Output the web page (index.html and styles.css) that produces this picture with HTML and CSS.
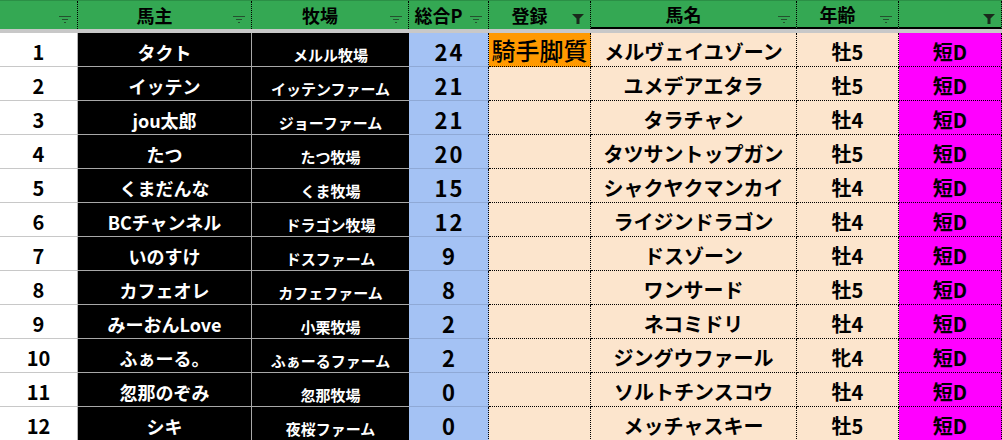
FILE: index.html
```html
<!DOCTYPE html>
<html lang="ja">
<head>
<meta charset="utf-8">
<link rel="stylesheet" href="styles.css">
</head>
<body>
<div class="sheet">
  <div class="row head">
    <div class="h"><span class="ht"></span><svg class="fi" viewBox="0 0 12 8"><path d="M0 .5h12M3 3.5h6M5 6.5h2"/></svg></div>
    <div class="h"><span class="ht">馬主</span><svg class="fi" viewBox="0 0 12 8"><path d="M0 .5h12M3 3.5h6M5 6.5h2"/></svg></div>
    <div class="h"><span class="ht">牧場</span><svg class="fi" viewBox="0 0 12 8"><path d="M0 .5h12M3 3.5h6M5 6.5h2"/></svg></div>
    <div class="h"><span class="ht">総合P</span><svg class="fi" viewBox="0 0 12 8"><path d="M0 .5h12M3 3.5h6M5 6.5h2"/></svg></div>
    <div class="h"><span class="ht">登録</span><svg class="ff" viewBox="0 0 12 10"><path d="M0 0h12L7.5 4.5V10h-3V4.5z"/></svg></div>
    <div class="h dark-under"><span class="ht">馬名</span><svg class="fi" viewBox="0 0 12 8"><path d="M0 .5h12M3 3.5h6M5 6.5h2"/></svg></div>
    <div class="h dark-under"><span class="ht">年齢</span><svg class="fi" viewBox="0 0 12 8"><path d="M0 .5h12M3 3.5h6M5 6.5h2"/></svg></div>
    <div class="h dark-under"><span class="ht"></span><svg class="ff" viewBox="0 0 12 10"><path d="M0 0h12L7.5 4.5V10h-3V4.5z"/></svg></div>
  </div>
  <div class="gap"></div>

  <div class="row"><div class="c c-idx">1</div><div class="c c-owner">タクト</div><div class="c c-farm">メルル牧場</div><div class="c c-pts">24</div><div class="c c-reg jockey">騎手脚質</div><div class="c c-horse">メルヴェイユゾーン</div><div class="c c-age">牡5</div><div class="c c-type">短D</div></div>
  <div class="row"><div class="c c-idx">2</div><div class="c c-owner">イッテン</div><div class="c c-farm">イッテンファーム</div><div class="c c-pts">21</div><div class="c c-reg"></div><div class="c c-horse">ユメデアエタラ</div><div class="c c-age">牡5</div><div class="c c-type">短D</div></div>
  <div class="row"><div class="c c-idx">3</div><div class="c c-owner">jou太郎</div><div class="c c-farm">ジョーファーム</div><div class="c c-pts">21</div><div class="c c-reg"></div><div class="c c-horse">タラチャン</div><div class="c c-age">牡4</div><div class="c c-type">短D</div></div>
  <div class="row"><div class="c c-idx">4</div><div class="c c-owner">たつ</div><div class="c c-farm">たつ牧場</div><div class="c c-pts">20</div><div class="c c-reg"></div><div class="c c-horse">タツサントップガン</div><div class="c c-age">牡5</div><div class="c c-type">短D</div></div>
  <div class="row"><div class="c c-idx">5</div><div class="c c-owner">くまだんな</div><div class="c c-farm">くま牧場</div><div class="c c-pts">15</div><div class="c c-reg"></div><div class="c c-horse">シャクヤクマンカイ</div><div class="c c-age">牡4</div><div class="c c-type">短D</div></div>
  <div class="row"><div class="c c-idx">6</div><div class="c c-owner">BCチャンネル</div><div class="c c-farm">ドラゴン牧場</div><div class="c c-pts">12</div><div class="c c-reg"></div><div class="c c-horse">ライジンドラゴン</div><div class="c c-age">牡4</div><div class="c c-type">短D</div></div>
  <div class="row"><div class="c c-idx">7</div><div class="c c-owner">いのすけ</div><div class="c c-farm">ドスファーム</div><div class="c c-pts">9</div><div class="c c-reg"></div><div class="c c-horse">ドスゾーン</div><div class="c c-age">牡4</div><div class="c c-type">短D</div></div>
  <div class="row"><div class="c c-idx">8</div><div class="c c-owner">カフェオレ</div><div class="c c-farm">カフェファーム</div><div class="c c-pts">8</div><div class="c c-reg"></div><div class="c c-horse">ワンサード</div><div class="c c-age">牡5</div><div class="c c-type">短D</div></div>
  <div class="row"><div class="c c-idx">9</div><div class="c c-owner">みーおんLove</div><div class="c c-farm">小栗牧場</div><div class="c c-pts">2</div><div class="c c-reg"></div><div class="c c-horse">ネコミドリ</div><div class="c c-age">牡4</div><div class="c c-type">短D</div></div>
  <div class="row"><div class="c c-idx">10</div><div class="c c-owner">ふぁーる。</div><div class="c c-farm">ふぁーるファーム</div><div class="c c-pts">2</div><div class="c c-reg"></div><div class="c c-horse">ジングウファール</div><div class="c c-age">牝4</div><div class="c c-type">短D</div></div>
  <div class="row"><div class="c c-idx">11</div><div class="c c-owner">忽那のぞみ</div><div class="c c-farm">忽那牧場</div><div class="c c-pts">0</div><div class="c c-reg"></div><div class="c c-horse">ソルトチンスコウ</div><div class="c c-age">牡4</div><div class="c c-type">短D</div></div>
  <div class="row"><div class="c c-idx">12</div><div class="c c-owner">シキ</div><div class="c c-farm">夜桜ファーム</div><div class="c c-pts">0</div><div class="c c-reg"></div><div class="c c-horse">メッチャスキー</div><div class="c c-age">牡5</div><div class="c c-type">短D</div></div>
</div>
</body>
</html>
```

FILE: styles.css
```css
* { box-sizing: border-box; }
html, body { margin: 0; padding: 0; background: #ffffff; }
body {
  width: 1002px;
  height: 440px;
  overflow: hidden;
  font-family: "Noto Sans CJK JP", "Noto Sans", sans-serif;
  color: #000;
}
.sheet { width: 1002px; }
.row {
  display: grid;
  grid-template-columns: 78px 174px 157px 80px 102px 206px 102px 103px;
  height: 34px;
}
.head {
  height: 29px;
  background: #34a853;
  border-top: 1px solid #2b8f46;
}
.gap { height: 4px; background: #c8c8c8; }

.h {
  position: relative;
  display: flex;
  align-items: center;
  justify-content: center;
  padding-right: 20px;
  border-right: 1px dotted #000;
  font-weight: 700;
  font-size: 18px;
  line-height: 1;
  white-space: nowrap;
}
.h.dark-under { border-bottom: 2px solid #000; }
.ht { display: block; margin-top: -1px; }
.fi, .ff {
  position: absolute;
  right: 6px;
  width: 12px;
}
.fi { bottom: 5px; height: 8px; }
.fi path { stroke: #24512f; stroke-width: 1; fill: none; }
.ff { bottom: 5px; height: 10px; }
.ff path { fill: #1a2a1c; }
.h.dark-under .fi, .h.dark-under .ff { bottom: 3px; }

.c {
  display: flex;
  align-items: center;
  justify-content: center;
  font-weight: 700;
  line-height: 1;
  white-space: nowrap;
  overflow: hidden;
  padding-top: 4px;
}
.c-idx {
  background: #fff;
  border-right: 1px solid #b4b4b4;
  border-bottom: 1px solid #c8c8c8;
  font-size: 20px;
}
.c-owner {
  background: #000;
  color: #fff;
  border-right: 1px solid #a8a8a8;
  border-bottom: 1px solid #a8a8a8;
  font-size: 18px;
}
.c-farm {
  background: #000;
  color: #fff;
  border-bottom: 1px solid #a8a8a8;
  font-size: 15px;
  padding-top: 9px;
}
.c-pts {
  background: #a4c2f4;
  border-right: 1px dotted #000;
  border-bottom: 1px solid #8fa9d6;
  font-size: 22px;
  letter-spacing: 2px;
  padding-left: 2px;
  padding-top: 2px;
}
.c-reg, .c-horse, .c-age {
  background: #fce5cd;
  border-right: 1px dotted #000;
  border-bottom: 1px dotted #000;
}
.c-reg.jockey {
  background: #ff9900;
  font-weight: 500;
  font-size: 24px;
  padding-top: 0;
}
.c-horse { font-size: 20px; font-weight: 700; }
.c-age { font-size: 20px; }
.c-type {
  background: #ff00ff;
  border-right: 1px dotted #000;
  border-bottom: 1px dotted #000;
  font-size: 20px;
}
```
